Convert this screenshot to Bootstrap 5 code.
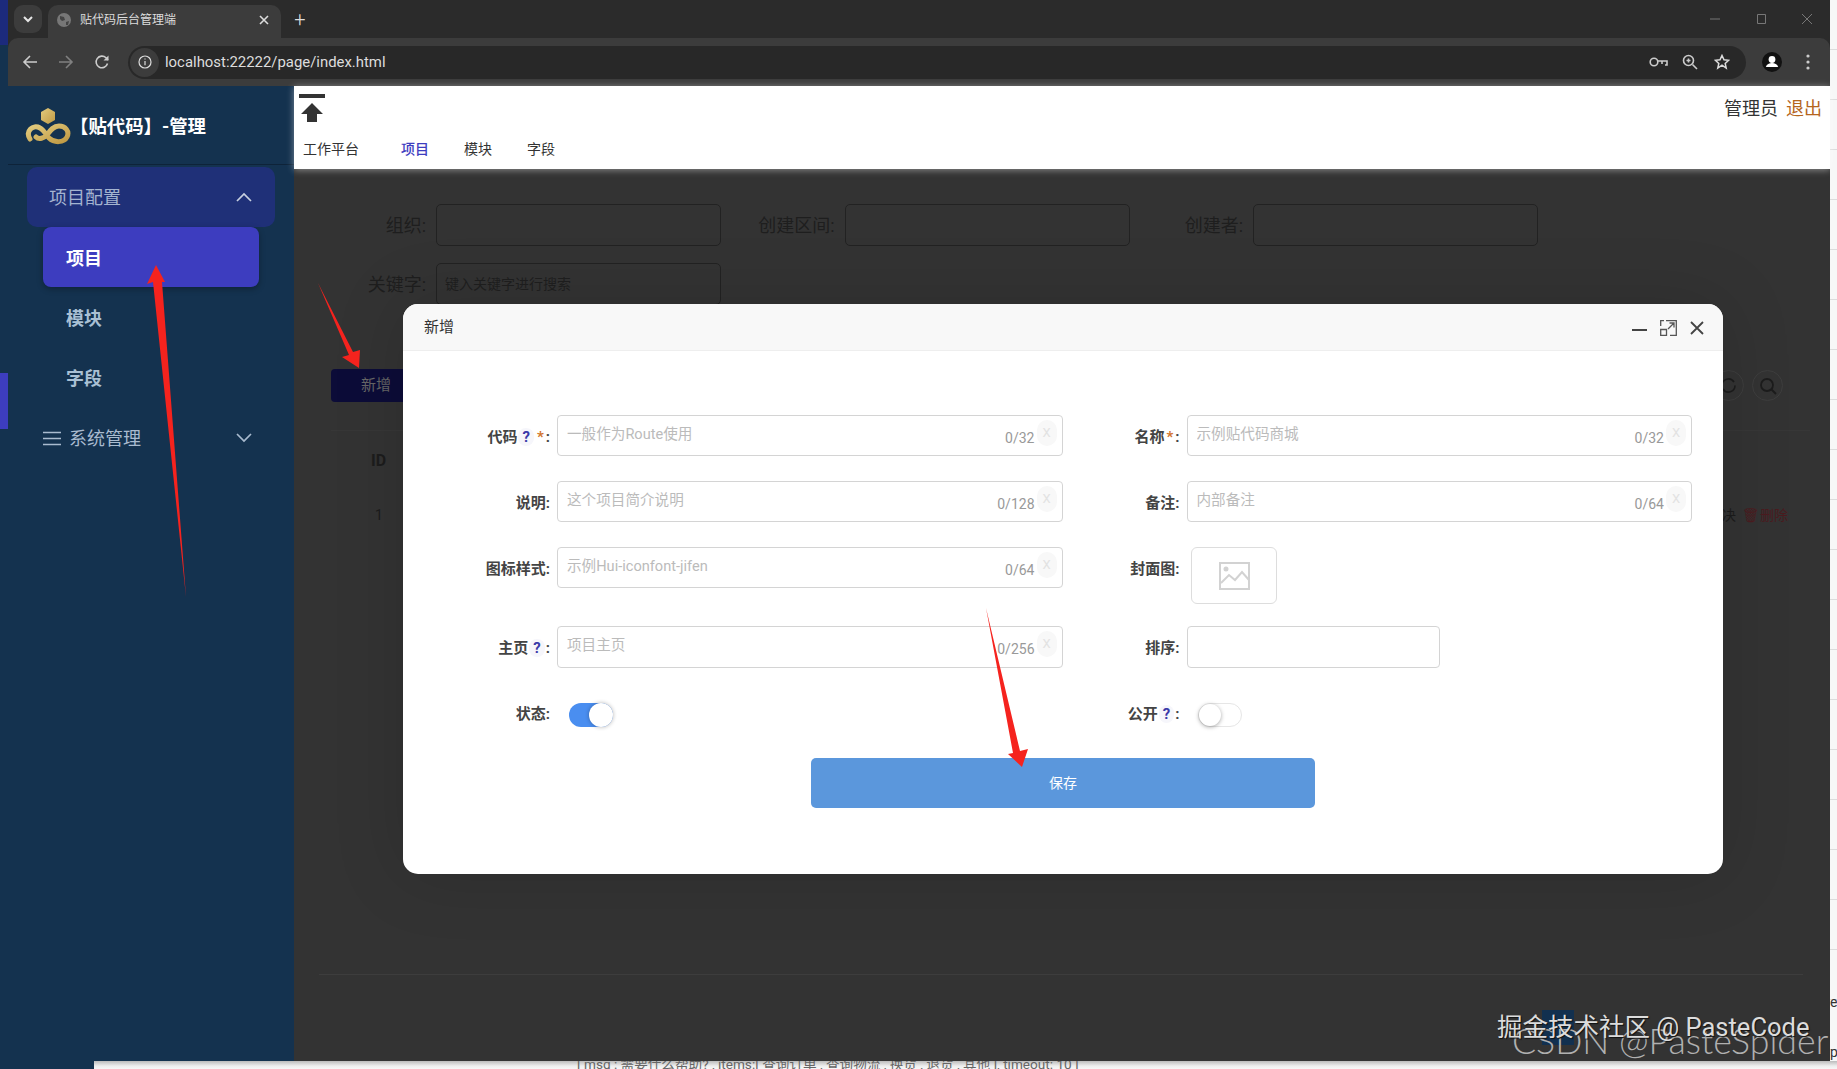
<!DOCTYPE html>
<html lang="zh-CN">
<head>
  <meta charset="UTF-8">
  <title>贴代码后台管理端</title>
  <link href="https://cdn.jsdelivr.net/npm/bootstrap@5.3.3/dist/css/bootstrap.min.css" rel="stylesheet">
  <style>
    html, body { height: 100%; overflow: hidden; }
    body { font-family: Roboto, "Noto Sans CJK SC", sans-serif; background: #f4f4f4; }
    a { text-decoration: none; }
    .desk { display: grid; grid-template-columns: 8px 1fr 7px; grid-template-rows: 1061px 8px; height: 1069px; }

    /* what shows around the browser window */
    .edge-left { background: #14324f; display: flex; flex-direction: column; }
    .edge-top { height: 45px; background: #1c2a7c; }
    .edge-gap { height: 328px; }
    .edge-blue { height: 56px; background: #3d3dbf; }
    .edge-right { background: repeating-linear-gradient(#f7f7f7 0 49px, #dcdcdc 49px 50px); font-size: 14px; color: #333; overflow: hidden; }
    .edge-right span { display: block; padding-top: 990px; line-height: 24px; }
    .edge-bottom { grid-column: 1 / 4; display: flex; overflow: hidden; height: 8px; background: linear-gradient(#bbb, #eee 5px, #f7f7f7); }
    .edge-navy { width: 94px; background: #14324f; }
    .edge-text { margin-left: 483px; font-size: 13.6px; line-height: 6px; color: #666; white-space: nowrap; }

    /* browser chrome */
    .win { display: flex; flex-direction: column; min-width: 0; background: #2b2b2b; }
    .tabstrip { height: 38px; background: #2b2b2b; color: #ddd; }
    .tab-down { width: 28px; height: 28px; margin: 5px 6px 0 6px; border-radius: 9px; background: #3c3c3c; }
    .tab-item { width: 233px; height: 33px; margin-top: 5px; padding: 0 9px 3px; background: #3c3c3c; border-radius: 10px 10px 0 0; font-size: 12px; gap: 9px; }
    .tab-add { width: 38px; font-size: 20px; font-weight: 300; }
    .win-btn { width: 46px; height: 38px; }
    .toolbar { height: 48px; background: #3c3c3c; border-radius: 10px 10px 0 0; padding: 0 4px; margin-top: 0; }
    .tool-btn { width: 36px; height: 36px; flex: none; }
    .omnibox { height: 33px; margin: 0 8px; background: #282828; border-radius: 17px; padding: 0 8px 0 2px; color: #ddd; font-size: 14.9px; }
    .info-chip { width: 29px; height: 29px; border-radius: 50%; background: #3c3c3c; margin-right: 6px; flex: none; }
    .omni-btn { width: 32px; height: 32px; }

    /* app */
    .app { flex: 1; min-height: 0; display: flex; }
    .side { width: 286px; flex: none; background: #14324f; }
    .side-head { height: 79px; border-bottom: 1px solid #0e2339; padding: 4px 0 0 17px; color: #fff; font-size: 18.4px; font-weight: 700; margin-bottom: 2px; }
    .side-head span { margin-left: -1px; }
    .side-link { display: flex; align-items: center; height: 60px; color: #a9bbcf; font-size: 18px; }
    .side-group { margin: 0 19px; padding: 0 22px; justify-content: space-between; background: #1f3078; border-radius: 10px; color: #a4b4d0; }
    .side-sub { margin: 0 35px; padding: 2px 0 0 23px; font-weight: 700; color: #a9c0d4; border-radius: 8px; }
    .side-sub.on { background: #3d3dbf; color: #fff; box-shadow: 0 2px 6px rgba(0,0,0,.3); }
    .side-sys { margin: 0 35px; padding: 2px 6px 0 0; justify-content: space-between; }

    .main { flex: 1; min-width: 0; position: relative; background: #333; display: flex; flex-direction: column; }
    .top { height: 83px; flex: none; background: #fff; box-shadow: 0 1px 7px rgba(255,255,255,.45); padding: 6px 8px 0 5px; position: relative; }
    .top-nav { margin: 15px 0 0 4px; font-size: 14px; gap: 35px; color: #333; line-height: 20px; }
    .top-nav a { color: #333; }
    .top-nav a:first-child { margin-right: 7px; }
    .top-nav a.on { color: #3d3dbf; font-weight: 500; }
    .top-user { font-size: 18px; color: #333; gap: 8px; margin-top: 4px; line-height: 26px; }
    .top-user a { color: #b5651d; }

    .filters { display: grid; grid-template-columns: repeat(3, 408.5px); row-gap: 17px; padding: 35px 0 0 19px; }
    .filter-cell { display: flex; align-items: center; color: #1e1e1e; font-size: 18px; }
    .filter-cell label { width: 113px; margin-right: 10px; text-align: right; flex: none; white-space: nowrap; }
    .dim-input.form-control { width: 285px; flex: none; height: 42px; background: transparent; border: 1px solid #222; border-radius: 5px; font-size: 14px; padding: 0 8px; box-shadow: none; }
    .dim-input::placeholder { color: #1f1f1f; opacity: 1; }
    .tools { margin: 64px 47px 0 37px; height: 33px; }
    .tool-add { width: 90px; height: 33px; background: #0c0c38; border-radius: 4px; color: #666; font-size: 15px; padding-left: 30px; line-height: 33px; }
    .tool-round { width: 31px; height: 31px; border: 1px solid #3e3e3e; border-radius: 50%; }
    .dim-table { margin: 28px 20px 0 37px; width: auto; --bs-table-bg: transparent; --bs-table-color: #1c1c1c; --bs-table-border-color: #373737; font-size: 14px; }
    .dim-table th, .dim-table td { padding: 0 0 0 40px; vertical-align: middle; background: transparent; border: 0; }
    .dim-table thead th { font-size: 16px; font-weight: 700; }
    .dim-table tbody td:first-child { padding-left: 44px; }
    .dim-table thead tr { height: 60px; border-top: 1px solid #373737; }
    .dim-table tbody tr { height: 50px; }
    .dim-table .act { text-align: right; padding: 0 22px 0 0; white-space: nowrap; font-weight: 400; font-size: 14px; }
    .act-del { color: #4b1b1f; font-size: 14px; margin-left: 6px; }
    .pager { margin-top: auto; height: 87px; flex: none; }
    .pager-line { height: 1px; background: #3d3d3d; margin: 0 27px 0 25px; }
    .pager-cur { width: 32px; height: 35px; background: #12304f; margin: 35px 256px 0 auto; }

    /* dialog */
    .dlg { position: absolute; left: 109px; top: 218px; width: 1320px; height: 570px; border: 0; border-radius: 15px; overflow: hidden; box-shadow: 0 0 70px rgba(0,0,0,.15); }
    .dlg .card-header { height: 47px; padding: 1px 19px 0 21px; background: #f8f8f8; border-bottom: 1px solid #eee; font-size: 15px; color: #333; }
    .dlg-btns { gap: 13px; }
    .dlg-body { padding: 64px 31px 0 30px; }
    .frm-r { margin-bottom: 25px; --bs-gutter-x: 0; height: 41px; }
    .frm-r3 { margin-bottom: 22px; height: 57px; }
    .frm-r4 { margin-bottom: 35px; height: 42px; }
    .frm-r5 { margin-bottom: 30px; height: 25px; }
    .frm-cell { display: flex; }
    .frm-cell > label { width: 117px; height: 41px; margin-right: 7px; flex: none; text-align: right; font-weight: 700; font-size: 15px; color: #444; line-height: 45px; white-space: nowrap; }
    .frm-r5 .frm-cell > label { height: 25px; line-height: 22px; }
    .tip-q { color: #3a3aa8; background: #f6f6fb; border-radius: 8px; padding: 0 4px; margin: 0 1px; }
    .req { color: #d2762e; margin: 0 2px; }
    .inp-wrap { position: relative; width: 505.5px; }
    .frm-input.form-control { height: 41px; border: 1px solid #d4d4d4; border-radius: 4px; font-size: 14.6px; padding: 0 8px 4px 9px; box-shadow: none; }
    .frm-r4 .frm-input.form-control, .frm-r4 .sort-input.form-control { height: 42px; }
    .frm-input::placeholder { color: #bbb; opacity: 1; }
    .inp-count { position: absolute; right: 28px; top: 13px; font-size: 14px; color: #999; line-height: 20px; }
    .inp-clear { position: absolute; right: 6px; top: 5px; width: 20px; height: 26px; border-radius: 10px; background: #f8f8f8; color: #e2e2e2; font-size: 13px; line-height: 26px; text-align: center; }
    .cover-box { width: 86px; height: 57px; margin-left: 4.5px; border: 1px solid #ddd; border-radius: 6px; }
    .sort-input.form-control { width: 253px; border: 1px solid #d4d4d4; border-radius: 4px; box-shadow: none; }
    .swt { display: block; position: relative; height: 24px; width: 44px; border-radius: 12px; }
    .swt-on { margin-left: 12px; background: #4a8ef0; }
    .swt-on::after { content: ""; position: absolute; right: 0; top: 0; width: 24px; height: 24px; border-radius: 50%; background: #fff; box-shadow: 0 0 4px rgba(0,0,0,.3); }
    .swt-off { margin-left: 11px; background: #fff; border: 1px solid #e6e6e6; }
    .swt-off::after { content: ""; position: absolute; left: 0; top: 0; width: 22px; height: 22px; border-radius: 50%; background: #fff; box-shadow: 0 1px 4px rgba(0,0,0,.35); }
    .save-btn.btn { width: 504px; height: 50px; margin-left: 378px; background: #5b97dc; border: 0; border-radius: 5px; color: #fff; font-size: 14px; }

    /* things lying over the whole shot */
    .mark-lines { position: absolute; left: 0; top: 0; pointer-events: none; }
    .wm-big { position: absolute; left: 1512px; top: 1018px; white-space: nowrap; font-size: 35.7px; line-height: 46px; font-weight: 300; color: #b0b0b0; font-family: Lato, sans-serif; }
    .wm-top { position: absolute; left: 1497px; top: 1010px; white-space: nowrap; font-size: 25.5px; line-height: 34px; color: #dcdcdc; text-shadow: 1px 1px 1px #111; }
  </style>
</head>
<body>

  <div class="desk">
    <div class="edge-left">
      <div class="edge-top"></div>
      <div class="edge-gap"></div>
      <div class="edge-blue"></div>
    </div>

    <div class="win">
      <div class="tabstrip d-flex align-items-start">
        <div class="tab-down d-flex align-items-center justify-content-center">
          <svg width="12" height="12" viewBox="0 0 12 12" fill="none" stroke="#e6e6e6" stroke-width="2"><path d="M2 4l4 4 4-4"/></svg>
        </div>
        <div class="tab-item d-flex align-items-center">
          <svg width="14" height="14" viewBox="0 0 14 14"><circle cx="7" cy="7" r="7" fill="#777"/><path d="M3 3l4 1 1 3-3 1-2-2zM9 9l3-1-1 4-2 0z" fill="#444"/></svg>
          <span class="flex-grow-1">贴代码后台管理端</span>
          <svg width="16" height="16" viewBox="0 0 16 16" stroke="#ddd" stroke-width="1.6"><path d="M4 4l8 8M12 4l-8 8"/></svg>
        </div>
        <div class="tab-add text-center" style="line-height:38px">+</div>
        <div class="ms-auto d-flex">
          <div class="win-btn d-flex align-items-center justify-content-center"><svg width="12" height="12" stroke="#777"><path d="M1 6h10"/></svg></div>
          <div class="win-btn d-flex align-items-center justify-content-center"><svg width="12" height="12" fill="none" stroke="#777"><path d="M2.5 1.5h8v9h-8z"/></svg></div>
          <div class="win-btn d-flex align-items-center justify-content-center"><svg width="12" height="12" stroke="#777"><path d="M1 1l10 10M11 1L1 11"/></svg></div>
        </div>
      </div>

      <div class="toolbar d-flex align-items-center">
        <div class="tool-btn d-flex align-items-center justify-content-center"><svg width="16" height="16" fill="none" stroke="#ccc" stroke-width="1.6"><path d="M15 8H2M8 2L2 8l6 6"/></svg></div>
        <div class="tool-btn d-flex align-items-center justify-content-center"><svg width="16" height="16" fill="none" stroke="#808080" stroke-width="1.6"><path d="M1 8h13M8 2l6 6-6 6"/></svg></div>
        <div class="tool-btn d-flex align-items-center justify-content-center"><svg width="16" height="16" viewBox="0 0 16 16" fill="none" stroke="#ccc" stroke-width="1.6"><path d="M13.5 9.5A5.8 5.8 0 1 1 12 3.8L14 6"/><path d="M14.5 1.5V6.5H9.5" fill="#ccc" stroke="none"/></svg></div>
        <div class="omnibox flex-grow-1 d-flex align-items-center">
          <div class="info-chip d-flex align-items-center justify-content-center">
            <svg width="14" height="14" viewBox="0 0 14 14" fill="none" stroke="#ddd" stroke-width="1.2"><circle cx="7" cy="7" r="6"/><path d="M7 6v4.2M7 3.4v1.2"/></svg>
          </div>
          <span class="flex-grow-1">localhost:22222/page/index.html</span>
          <div class="omni-btn d-flex align-items-center justify-content-center"><svg width="19" height="12" viewBox="0 0 19 12" fill="none" stroke="#ccc" stroke-width="1.6"><circle cx="5" cy="6" r="3.8"/><path d="M9 5h9v4h-2M13 5v3"/></svg></div>
          <div class="omni-btn d-flex align-items-center justify-content-center"><svg width="16" height="16" viewBox="0 0 16 16" fill="none" stroke="#ccc" stroke-width="1.6"><circle cx="6.5" cy="6.5" r="5"/><path d="M10.5 10.5L15 15M4.5 6.5h4M6.5 4.5v4"/></svg></div>
          <div class="omni-btn d-flex align-items-center justify-content-center"><svg width="16" height="16" viewBox="0 0 16 16" fill="none" stroke="#ddd" stroke-width="1.5"><path d="M8 1.5l2 4.3 4.6.5-3.4 3.1 1 4.6L8 11.2l-4.2 2.8 1-4.6L1.4 6.3 6 5.8z"/></svg></div>
        </div>
        <div class="tool-btn d-flex align-items-center justify-content-center"><svg width="20" height="20" viewBox="0 0 20 20"><circle cx="10" cy="10" r="10" fill="#111"/><circle cx="10" cy="7.5" r="3.4" fill="#fff"/><path d="M3.8 15c1-3 3.400-4 6.200-4s5.200 1 6.200 4z" fill="#fff"/></svg></div>
        <div class="tool-btn d-flex align-items-center justify-content-center"><svg width="4" height="16" fill="#ccc"><circle cx="2" cy="2" r="1.600"/><circle cx="2" cy="8" r="1.600"/><circle cx="2" cy="14" r="1.600"/></svg></div>
      </div>

      <div class="app">
        <aside class="side">
          <div class="side-head d-flex align-items-center">
            <svg width="46" height="38" viewBox="0 0 46 38" fill="none">
              <defs><linearGradient id="gold" x1="0" y1="0" x2="1" y2="1"><stop offset="0" stop-color="#e3cb7e"/><stop offset="1" stop-color="#c09a44"/></linearGradient></defs>
              <path d="M23 0l7 4v8l-7 4-7-4V4z" fill="url(#gold)"/>
              <path d="M5 31C0 23 8 16 15 20c4 2 6 7 9 10 5 5 15 5 18-1 3-6-2-11-8-11-6 0-9 5-12 9-3 3-8 5-11 2" stroke="url(#gold)" stroke-width="5" stroke-linecap="round"/>
            </svg>
            <span>【贴代码】-管理</span>
          </div>
          <a class="side-link side-group" href="#">项目配置
            <svg width="18" height="10" viewBox="0 0 18 10" fill="none" stroke="#c8d0e0" stroke-width="1.7"><path d="M2 9l7-7 7 7"/></svg>
          </a>
          <a class="side-link side-sub on" href="#">项目</a>
          <a class="side-link side-sub" href="#">模块</a>
          <a class="side-link side-sub" href="#">字段</a>
          <a class="side-link side-sys" href="#">
            <span class="d-flex align-items-center gap-2">
              <svg width="18" height="15" viewBox="0 0 18 15" stroke="#a9bbcf" stroke-width="1.6"><path d="M0 1.500h18M0 7.500h18M0 13.500h18"/></svg>
              系统管理
            </span>
            <svg width="18" height="10" viewBox="0 0 18 10" fill="none" stroke="#a9bbcf" stroke-width="1.7"><path d="M2 1l7 7 7-7"/></svg>
          </a>
        </aside>

        <main class="main">
          <header class="top d-flex justify-content-between">
            <div>
              <svg width="26" height="32" viewBox="0 0 26 32" class="d-block"><rect y="2" width="26" height="4" fill="#333"/><path d="M13 11l11 11h-6v8H8v-8H2z" fill="#333"/></svg>
              <div class="top-nav d-flex">
                <a href="#">工作平台</a>
                <a class="on" href="#">项目</a>
                <a href="#">模块</a>
                <a href="#">字段</a>
              </div>
            </div>
            <div class="top-user d-flex align-items-start">
              <span>管理员</span><a href="#">退出</a>
            </div>
          </header>

          <div class="filters">
            <div class="filter-cell"><label>组织:</label><input class="form-control dim-input"></div>
            <div class="filter-cell"><label>创建区间:</label><input class="form-control dim-input"></div>
            <div class="filter-cell"><label>创建者:</label><input class="form-control dim-input"></div>
            <div class="filter-cell"><label>关键字:</label><input class="form-control dim-input" placeholder="键入关键字进行搜索"></div>
          </div>

          <div class="tools d-flex align-items-center justify-content-between">
            <div class="tool-add">新增</div>
            <div class="d-flex gap-2">
              <div class="tool-round d-flex align-items-center justify-content-center"><svg width="17" height="17" viewBox="0 0 17 17" fill="none" stroke="#1c1c1c" stroke-width="1.600"><path d="M15 8.500a6.500 6.500 0 0 1-12 3.500M2 8.500a6.500 6.500 0 0 1 12-3.500"/></svg></div>
              <div class="tool-round d-flex align-items-center justify-content-center"><svg width="18" height="18" viewBox="0 0 18 18" fill="none" stroke="#1c1c1c" stroke-width="1.800"><circle cx="8" cy="8" r="6"/><path d="M12.500 12.500L17 17"/></svg></div>
            </div>
          </div>

          <table class="table dim-table">
            <thead><tr><th>ID</th><th class="act" style="padding-right:103px">操作</th></tr></thead>
            <tbody><tr><td>1</td><td class="act">解决<span class="act-del">🗑删除</span></td></tr></tbody>
          </table>

          <div class="pager">
            <div class="pager-line"></div>
            <div class="pager-cur"></div>
          </div>

          <div class="card dlg">
            <div class="card-header d-flex align-items-center justify-content-between">
              <span>新增</span>
              <div class="dlg-btns d-flex align-items-center">
                <svg width="15" height="17" viewBox="0 0 15 17" stroke="#444" stroke-width="2"><path d="M0 11h15"/></svg>
                <svg width="17" height="16" viewBox="0 0 17 16" fill="none" stroke="#555" stroke-width="1.300"><path d="M6 .7h10.300v14.600H10M.7 6V.7H4M.7 9.500h5.800v5.800H.7zM8 9l6-6M9.500 3H14v4.500"/></svg>
                <svg width="14" height="14" viewBox="0 0 14 14" stroke="#444" stroke-width="1.800"><path d="M1 1l12 12M13 1L1 13"/></svg>
              </div>
            </div>
            <form class="dlg-body">
              <div class="row frm-r">
                <div class="col-6 frm-cell">
                  <label>代码<span class="tip-q">?</span><span class="req">*</span>:</label>
                  <div class="inp-wrap"><input class="form-control frm-input" placeholder="一般作为Route使用"><span class="inp-count">0/32</span><span class="inp-clear">X</span></div>
                </div>
                <div class="col-6 frm-cell">
                  <label>名称<span class="req">*</span>:</label>
                  <div class="inp-wrap"><input class="form-control frm-input" placeholder="示例贴代码商城"><span class="inp-count">0/32</span><span class="inp-clear">X</span></div>
                </div>
              </div>
              <div class="row frm-r">
                <div class="col-6 frm-cell">
                  <label>说明:</label>
                  <div class="inp-wrap"><input class="form-control frm-input" placeholder="这个项目简介说明"><span class="inp-count">0/128</span><span class="inp-clear">X</span></div>
                </div>
                <div class="col-6 frm-cell">
                  <label>备注:</label>
                  <div class="inp-wrap"><input class="form-control frm-input" placeholder="内部备注"><span class="inp-count">0/64</span><span class="inp-clear">X</span></div>
                </div>
              </div>
              <div class="row frm-r frm-r3">
                <div class="col-6 frm-cell">
                  <label>图标样式:</label>
                  <div class="inp-wrap"><input class="form-control frm-input" placeholder="示例Hui-iconfont-jifen"><span class="inp-count">0/64</span><span class="inp-clear">X</span></div>
                </div>
                <div class="col-6 frm-cell">
                  <label>封面图:</label>
                  <div class="cover-box d-flex align-items-center justify-content-center">
                    <svg width="31" height="28" viewBox="0 0 31 28" fill="none" stroke="#d2d2d2" stroke-width="2"><rect x="1" y="1" width="29" height="26"/><path d="M2 21l8-8 6 5 7-8 7 8"/><circle cx="7" cy="7" r="1.500" fill="#d2d2d2"/></svg>
                  </div>
                </div>
              </div>
              <div class="row frm-r frm-r4">
                <div class="col-6 frm-cell">
                  <label>主页<span class="tip-q">?</span>:</label>
                  <div class="inp-wrap"><input class="form-control frm-input" placeholder="项目主页"><span class="inp-count">0/256</span><span class="inp-clear">X</span></div>
                </div>
                <div class="col-6 frm-cell">
                  <label>排序:</label>
                  <input class="form-control sort-input">
                </div>
              </div>
              <div class="row frm-r frm-r5">
                <div class="col-6 frm-cell">
                  <label>状态:</label>
                  <span class="swt swt-on"></span>
                </div>
                <div class="col-6 frm-cell">
                  <label>公开<span class="tip-q">?</span>:</label>
                  <span class="swt swt-off"></span>
                </div>
              </div>
              <button type="button" class="btn save-btn">保存</button>
            </form>
          </div>
        </main>
      </div>
    </div>

    <div class="edge-right"><span>e</span><span style="padding-top:26px">pa</span></div>

    <div class="edge-bottom">
      <div class="edge-navy"></div>
      <div class="edge-text">[ msg : 需要什么帮助? , items:[ 查询订单 , 查询物流 , 换货 , 退货 , 其他 ], timeout: 10 ]</div>
    </div>
  </div>

  <!-- red arrows drawn on top of the shot -->
  <svg class="mark-lines" width="1837" height="1069" viewBox="0 0 1837 1069" fill="#f5231e">
    <polygon points="186,597 162,282 165,282 156,265 147,284 153,282"/>
    <polygon points="318,283 353,352 360,350 359,368 342,357 349,355"/>
    <polygon points="986,608 1020,751 1028,749 1022,767 1008,754 1013,753"/>
  </svg>
  <div class="wm-big">CSDN @PasteSpider</div>
  <div class="wm-top">掘金技术社区 @ PasteCode</div>

</body>
</html>
